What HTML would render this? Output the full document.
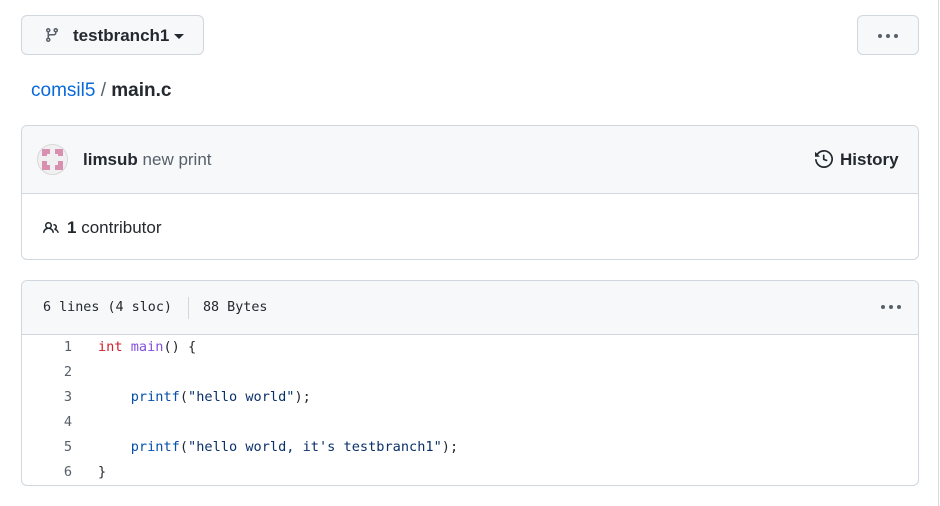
<!DOCTYPE html>
<html><head><style>
body{margin:0;width:940px;height:506px;background:#fff;font-family:"Liberation Sans",sans-serif;color:#24292f;position:relative;overflow:hidden}
.abs{position:absolute}
.btn{border:1px solid #d0d7de;background:#f6f8fa;border-radius:6px;box-sizing:border-box}
.mono{font-family:"DejaVu Sans Mono","Liberation Mono",monospace}
.ln{position:absolute;left:50px;width:22px;text-align:right;color:#57606a;font-size:13.6px}
.cd{position:absolute;left:98px;font-size:13.6px;white-space:pre;color:#24292f}
</style></head><body>
<div class="abs" style="right:1px;top:0;width:1px;height:506px;background:#d8dce0"></div>
<div class="abs btn" style="left:21px;top:15px;width:183px;height:40px">
<svg class="abs" style="left:22px;top:11px" width="16" height="16" viewBox="0 0 16 16"><path fill="#57606a" d="M9.5 3.25a2.25 2.25 0 1 1 3 2.122V6A2.5 2.5 0 0 1 10 8.5H6a1 1 0 0 0-1 1v1.128a2.251 2.251 0 1 1-1.5 0V5.372a2.25 2.25 0 1 1 1.5 0v1.836A2.493 2.493 0 0 1 6 7h4a1 1 0 0 0 1-1v-.628A2.25 2.25 0 0 1 9.5 3.25Zm-6 0a.75.75 0 1 0 1.5 0 .75.75 0 0 0-1.5 0Zm8.25-.75a.75.75 0 1 0 0 1.5.75.75 0 0 0 0-1.5ZM4.25 12a.75.75 0 1 0 0 1.5.75.75 0 0 0 0-1.5Z"/></svg>
<span class="abs" style="left:51px;top:10px;font-size:17px;font-weight:bold">testbranch1</span>
<span class="abs" style="left:152px;top:18px;width:0;height:0;border-left:5px solid transparent;border-right:5px solid transparent;border-top:5px solid #24292f"></span>
</div>
<div class="abs btn" style="left:857px;top:15px;width:62px;height:40px">
<span class="abs" style="left:20px;top:18px;width:4px;height:4px;border-radius:2px;background:#57606a;box-shadow:8px 0 #57606a,16px 0 #57606a"></span>
</div>
<div class="abs" style="left:31px;top:80px;font-size:19px"><span style="color:#0969da">comsil5</span> <span style="color:#57606a">/</span> <b>main.c</b></div>
<div class="abs" style="left:21px;top:125px;width:898px;height:135px;border:1px solid #d0d7de;border-radius:6px;box-sizing:border-box;overflow:hidden">
<div class="abs" style="left:0;top:0;right:0;height:67px;background:#f6f8fa;border-bottom:1px solid #d0d7de"></div>
<div class="abs" style="left:15px;top:18px;width:31px;height:31px;border-radius:50%;background:#f0f0f0;border:1px solid #d8d8d8;box-sizing:border-box;overflow:hidden">
<div class="abs" style="left:4px;top:4px;width:21px;height:21px;border:5px solid #d98fb0;box-sizing:border-box"></div>
<div class="abs" style="left:12px;top:0;width:5px;height:31px;background:#f0f0f0"></div>
<div class="abs" style="left:0;top:11px;width:31px;height:5px;background:#f0f0f0"></div>
</div>
<span class="abs" style="left:61px;top:24px;font-size:17px"><b>limsub</b> <span style="color:#57606a">new print</span></span>
<svg class="abs" style="left:793px;top:24px" width="18" height="18" viewBox="0 0 16 16"><path fill="#24292f" d="m.427 1.927 1.215 1.215a8.002 8.002 0 1 1-1.6 5.685.75.75 0 1 1 1.493-.154 6.5 6.5 0 1 0 1.18-4.458l1.358 1.358A.25.25 0 0 1 3.896 6H.25A.25.25 0 0 1 0 5.75V2.104a.25.25 0 0 1 .427-.177ZM7.75 4a.75.75 0 0 1 .75.75v2.992l2.028.812a.75.75 0 0 1-.557 1.392l-2.5-1A.751.751 0 0 1 7 8.25v-3.5A.75.75 0 0 1 7.75 4Z"/></svg>
<span class="abs" style="left:818px;top:24px;font-size:17px;font-weight:bold">History</span>
<svg class="abs" style="left:20px;top:94px" width="18" height="16" viewBox="0 0 16 16"><path fill="#24292f" d="M2 5.5a3.5 3.5 0 1 1 5.898 2.549 5.508 5.508 0 0 1 3.034 4.084.75.75 0 1 1-1.482.235 4 4 0 0 0-7.900 0 .75.75 0 0 1-1.482-.236A5.507 5.507 0 0 1 3.102 8.05 3.493 3.493 0 0 1 2 5.5ZM11 4a3.001 3.001 0 0 1 2.22 5.018 5.01 5.01 0 0 1 2.56 3.012.749.749 0 0 1-.885.954.752.752 0 0 1-.549-.514 3.507 3.507 0 0 0-2.522-2.372.75.75 0 0 1-.574-.73v-.352a.75.75 0 0 1 .416-.672A1.5 1.5 0 0 0 11 5.5.75.75 0 0 1 11 4Zm-5.5-.5a2 2 0 1 0-.001 3.999A2 2 0 0 0 5.5 3.5Z"/></svg>
<span class="abs" style="left:45px;top:92px;font-size:17px"><b>1</b> contributor</span>
</div>
<div class="abs" style="left:21px;top:280px;width:898px;height:206px;border:1px solid #d0d7de;border-radius:6px;box-sizing:border-box;overflow:hidden">
<div class="abs" style="left:0;top:0;right:0;height:53px;background:#f6f8fa;border-bottom:1px solid #d0d7de"></div>
<span class="abs mono" style="left:21px;top:19px;font-size:13.4px">6 lines (4 sloc)</span>
<div class="abs" style="left:166px;top:16px;width:1px;height:22px;background:#d0d7de"></div>
<span class="abs mono" style="left:181px;top:19px;font-size:13.4px">88 Bytes</span>
<span class="abs" style="left:859px;top:24px;width:4px;height:4px;border-radius:2px;background:#57606a;box-shadow:8px 0 #57606a,16px 0 #57606a"></span>
</div>
<div class="mono">
<div class="ln" style="top:339px">1</div><div class="cd" style="top:339px"><span style="color:#cf222e">int</span> <span style="color:#8250df">main</span>() {</div>
<div class="ln" style="top:364px">2</div>
<div class="ln" style="top:389px">3</div><div class="cd" style="top:389px">    <span style="color:#0550ae">printf</span>(<span style="color:#0a3069">"hello world"</span>);</div>
<div class="ln" style="top:414px">4</div>
<div class="ln" style="top:439px">5</div><div class="cd" style="top:439px">    <span style="color:#0550ae">printf</span>(<span style="color:#0a3069">"hello world, it's testbranch1"</span>);</div>
<div class="ln" style="top:464px">6</div><div class="cd" style="top:464px">}</div>
</div>
</body></html>
